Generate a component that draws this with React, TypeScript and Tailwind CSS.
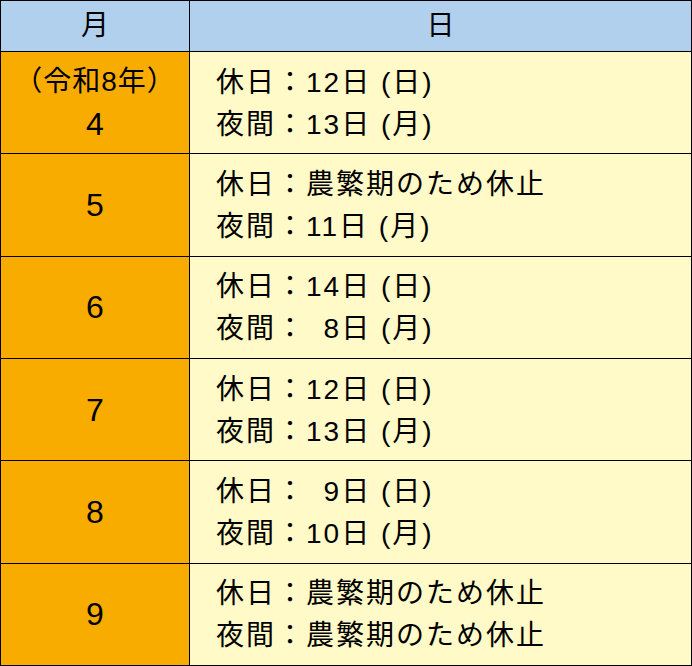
const rows = [
  { month: "4", era: true, holiday: "12日 (日)", night: "13日 (月)" },
  { month: "5", holiday: "農繁期のため休止", night: "11日 (月)" },
  { month: "6", holiday: "14日 (日)", night: "8日 (月)" },
  { month: "7", holiday: "12日 (日)", night: "13日 (月)" },
  { month: "8", holiday: "9日 (日)", night: "10日 (月)" },
  { month: "9", holiday: "農繁期のため休止", night: "農繁期のため休止" },
];

// single-digit days get an invisible 0 so they line up with the two-digit ones
const Day = ({ text }: { text: string }) => {
  if (/^\d日/.test(text)) {
    return (
      <>
        <span className="invisible">0</span>
        {text}
      </>
    );
  }
  return <>{text}</>;
};

export default function App() {
  return (
    <div
      className="w-[692px] h-[666px] bg-white"
      style={{ fontFamily: '"Liberation Sans", "Noto Sans CJK JP", sans-serif' }}
    >
      <div className="grid h-full grid-cols-[188px_1fr] grid-rows-[50px_repeat(6,1fr)] gap-px bg-black p-px text-[28px] leading-[42px] text-black">
        {/* Header */}
        <div className="flex items-center justify-center bg-[#b0d0ee]">月</div>
        <div className="flex items-center justify-center bg-[#b0d0ee]">日</div>

        {rows.map((r, i) => (
          <div key={i} className="contents">
            <div className="flex flex-col items-center justify-center bg-[#f8ac00]">
              {r.era && <div className="tracking-[1px]">（令和8年）</div>}
              <div className="text-[32px]">{r.month}</div>
            </div>
            <div className="flex flex-col justify-center bg-[#fffac8] pl-[26px] pt-[2px] tracking-[2px] whitespace-pre">
              <div>
                休日：<Day text={r.holiday} />
              </div>
              <div>
                夜間：<Day text={r.night} />
              </div>
            </div>
          </div>
        ))}
      </div>
    </div>
  );
}
